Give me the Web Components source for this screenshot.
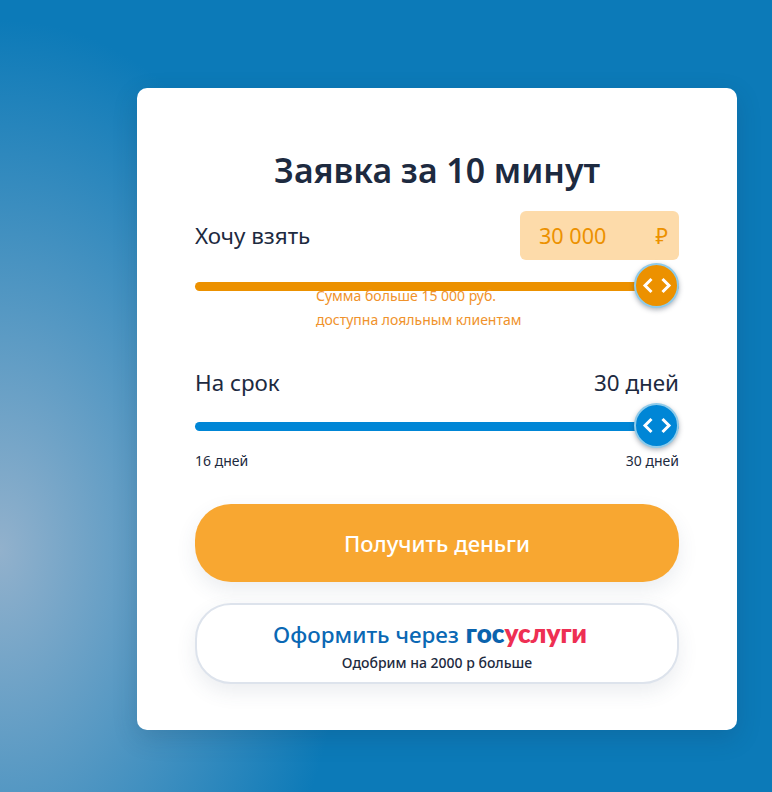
<!DOCTYPE html>
<html lang="ru">
<head>
<meta charset="utf-8">
<title>Заявка за 10 минут</title>
<style>
  html, body { margin: 0; height: 100%; overflow: hidden; }
  body {
    background: radial-gradient(ellipse 350px 530px at 0 550px, #92b1cc 0%, #0c7ab8 100%) #0c7ab8;
    font-family: "Noto Sans", "Open Sans", sans-serif;
    color: #1d2a40;
  }
</style>
</head>
<body>
<loan-card>
  <span slot="title">Заявка за 10 минут</span>
  <amount-row label="Хочу взять" value="30 000"></amount-row>
  <range-track color="#ec9100" ring="#8fcbea"></range-track>
  <limit-hint>Сумма больше 15 000 руб.<br>доступна лояльным клиентам</limit-hint>
  <term-row label="На срок" value="30 дней"></term-row>
  <range-track color="#0086d6" ring="#8fcbea"></range-track>
  <term-limits from="16 дней" to="30 дней"></term-limits>
  <main-button>Получить деньги</main-button>
  <gos-button></gos-button>
</loan-card>

<script>
class LoanCard extends HTMLElement {
  constructor() {
    super();
    this.attachShadow({ mode: "open" });
    this.shadowRoot.innerHTML = `
      <style>
        :host {
          display: block;
          box-sizing: border-box;
          width: 600px;
          height: 642px;
          margin: 88px 0 0 137px;
          padding: 61px 58px 0;
          background: #fff;
          border-radius: 10px;
          box-shadow: 0 8px 24px rgba(20, 50, 80, .18);
        }
        h1 {
          margin: 0 0 20px;
          height: 42px;
          line-height: 42px;
          font-size: 33.8px;
          font-weight: 600;
          text-align: center;
          color: #1d2a40;
        }
      </style>
      <h1><slot name="title"></slot></h1>
      <slot></slot>
    `;
  }
}

class AmountRow extends HTMLElement {
  constructor() {
    super();
    this.attachShadow({ mode: "open" });
    this.shadowRoot.innerHTML = `
      <style>
        :host {
          display: flex;
          justify-content: space-between;
          align-items: center;
          height: 49px;
          margin-bottom: 22px;
          font-size: 22.4px;
        }
        .field {
          box-sizing: border-box;
          display: flex;
          justify-content: space-between;
          align-items: center;
          width: 159px;
          height: 49px;
          padding: 0 11px 0 19px;
          border-radius: 6px;
          background: #fddbaa;
          color: #ec9100;
          font-size: 21.6px;
        }
      </style>
      <span>${this.getAttribute("label")}</span>
      <div class="field"><span>${this.getAttribute("value")}</span><span>₽</span></div>
    `;
  }
}

class RangeTrack extends HTMLElement {
  constructor() {
    super();
    this.attachShadow({ mode: "open" });
    const color = this.getAttribute("color");
    const ring = this.getAttribute("ring");
    this.shadowRoot.innerHTML = `
      <style>
        :host {
          display: block;
          position: relative;
          height: 9px;
          border-radius: 5px;
          background: ${color};
        }
        .thumb {
          position: absolute;
          right: 0;
          top: -19px;
          box-sizing: border-box;
          width: 45px;
          height: 45px;
          border-radius: 50%;
          border: 2px solid ${ring};
          background: ${color};
          box-shadow: 0 2px 5px rgba(30, 40, 60, .35);
          display: flex;
          align-items: center;
          justify-content: center;
        }
        svg { display: block; }
      </style>
      <div class="thumb">
        <svg width="30" height="17" viewBox="0 0 30 17" fill="none" stroke="#fff" stroke-width="3">
          <path d="M9.5 2 L3 8.5 L9.5 15"/>
          <path d="M20.5 2 L27 8.5 L20.5 15"/>
        </svg>
      </div>
    `;
  }
}

class LimitHint extends HTMLElement {
  constructor() {
    super();
    this.attachShadow({ mode: "open" });
    this.shadowRoot.innerHTML = `
      <style>
        :host {
          display: block;
          position: relative;
          margin: -7px 0 0 121px;
          font-size: 14px;
          line-height: 24px;
          color: #f0922b;
        }
      </style>
      <slot></slot>
    `;
  }
}

class TermRow extends HTMLElement {
  constructor() {
    super();
    this.attachShadow({ mode: "open" });
    this.shadowRoot.innerHTML = `
      <style>
        :host {
          display: flex;
          justify-content: space-between;
          align-items: center;
          height: 30px;
          margin: 35px 0 25px;
          font-size: 22.4px;
        }
      </style>
      <span>${this.getAttribute("label")}</span>
      <span>${this.getAttribute("value")}</span>
    `;
  }
}

class TermLimits extends HTMLElement {
  constructor() {
    super();
    this.attachShadow({ mode: "open" });
    this.shadowRoot.innerHTML = `
      <style>
        :host {
          display: flex;
          justify-content: space-between;
          height: 20px;
          margin: 20px 0 33px;
          line-height: 20px;
          font-size: 14px;
        }
      </style>
      <span>${this.getAttribute("from")}</span>
      <span>${this.getAttribute("to")}</span>
    `;
  }
}

class MainButton extends HTMLElement {
  constructor() {
    super();
    this.attachShadow({ mode: "open" });
    this.shadowRoot.innerHTML = `
      <style>
        :host {
          display: flex;
          align-items: center;
          justify-content: center;
          height: 78px;
          margin-bottom: 21px;
          border-radius: 36px;
          background: #f8a731;
          color: #fff;
          font-size: 22px;
          font-weight: 500;
          box-shadow: 0 8px 20px rgba(60, 80, 110, .1);
        }
      </style>
      <slot></slot>
    `;
  }
}

class GosButton extends HTMLElement {
  constructor() {
    super();
    this.attachShadow({ mode: "open" });
    this.shadowRoot.innerHTML = `
      <style>
        :host {
          display: flex;
          flex-direction: column;
          align-items: center;
          box-sizing: border-box;
          height: 81px;
          padding-top: 12px;
          border: 2px solid #dde3ec;
          border-radius: 36px;
          background: #fff;
          box-shadow: 0 8px 20px rgba(60, 80, 110, .1);
        }
        .top { padding-right: 14px; color: #0a68b4; font-size: 22.4px; line-height: 32px; font-weight: 500; }
        .logo { font-family: "Lato", "Noto Sans", sans-serif; font-size: 26px; font-weight: 800; margin-left: 1px; }
        .blue { color: #0a63ad; }
        .red { color: #ee2f53; }
        .sub { margin-top: 1px; font-size: 14px; line-height: 22px; font-weight: 500; color: #1d2a40; }
      </style>
      <div class="top">Оформить через <span class="logo"><span class="blue">гос</span><span class="red">услуги</span></span></div>
      <div class="sub">Одобрим на 2000 р больше</div>
    `;
  }
}

customElements.define("loan-card", LoanCard);
customElements.define("amount-row", AmountRow);
customElements.define("range-track", RangeTrack);
customElements.define("limit-hint", LimitHint);
customElements.define("term-row", TermRow);
customElements.define("term-limits", TermLimits);
customElements.define("main-button", MainButton);
customElements.define("gos-button", GosButton);
</script>
</body>
</html>
